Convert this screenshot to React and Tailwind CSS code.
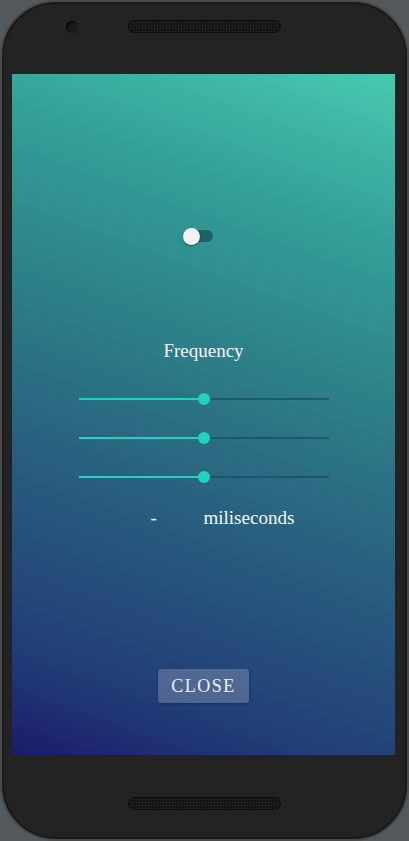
const Slider = ({ value = 50 }) => (
  <div className="relative h-[14px] w-[250px]">
    <div className="absolute left-0 right-0 top-[6px] h-[2px] bg-[#1d4a5e]/70" />
    <div className="absolute left-0 top-[6px] h-[2px] bg-[#1fd3c0]" style={{ width: `${value}%` }} />
    <div
      className="absolute top-[1px] h-[12px] w-[12px] -translate-x-1/2 rounded-full bg-[#1fd3c0]"
      style={{ left: `${value}%` }}
    />
  </div>
);

const Grille = () => (
  <div className="h-[13px] w-[153px] rounded-full border border-[#0c0c0c] bg-[#151515] bg-[radial-gradient(circle,#333_0.7px,transparent_0.9px)] bg-[length:3px_3px]" />
);

export default function App() {
  return (
    <div className="h-[841px] w-[409px] bg-[#52585b]" style={{ fontFamily: '"Liberation Serif", "DejaVu Serif", serif' }}>
      <div className="flex h-full w-full flex-col rounded-[56px] border-2 border-[#4a4a4a] bg-[#232323] shadow-[inset_0_0_0_2px_#1a1a1a]">
        {/* top bezel */}
        <div className="relative flex h-[72px] items-start justify-center pt-[18px]">
          <div className="absolute left-[64px] top-[19px] h-[12px] w-[12px] rounded-full bg-[#1a1a1a] shadow-[inset_1px_1px_2px_#000]" />
          <Grille />
        </div>

        {/* screen */}
        <div className="ml-[10px] mr-[12px] flex h-[681px] flex-col items-center bg-[linear-gradient(200deg,#49c9b0_0%,#34a19a_20%,#2e8589_38%,#2a6a82_55%,#26517c_72%,#223f77_86%,#1b1c6b_100%)] text-white">
          <div className="mt-[156px] ml-[-12px] flex items-center">
            <div className="relative h-[12px] w-[30px]">
              <div className="absolute left-[6px] right-0 top-0 h-[12px] rounded-full bg-[#1d5258]/80" />
              <div className="absolute left-0 top-[-2px] h-[17px] w-[17px] rounded-full bg-[#f2f2f2] shadow-[0_1px_2px_rgba(0,0,0,0.35)]" />
            </div>
          </div>

          <div className="mt-[97px] text-[19px] leading-[24px] text-[#f4f6f6]">Frequency</div>

          <div className="mt-[29px] flex flex-col gap-[25px]">
            <Slider value={50} />
            <Slider value={50} />
            <Slider value={50} />
          </div>

          <div className="mt-[22px] flex w-[250px] items-center text-[19px] leading-[24px] text-[#f4f6f6]">
            <span className="ml-[72px] w-[53px]">-</span>
            <span>miliseconds</span>
          </div>

          <button className="mt-[139px] h-[34px] w-[91px] rounded-[3px] bg-white/20 text-[18px] tracking-[1.5px] text-[#eef1f6] shadow-[0_1px_3px_rgba(0,0,0,0.3)]">
            CLOSE
          </button>
        </div>

        {/* bottom bezel */}
        <div className="flex flex-1 items-start justify-center pt-[42px]">
          <Grille />
        </div>
      </div>
    </div>
  );
}
